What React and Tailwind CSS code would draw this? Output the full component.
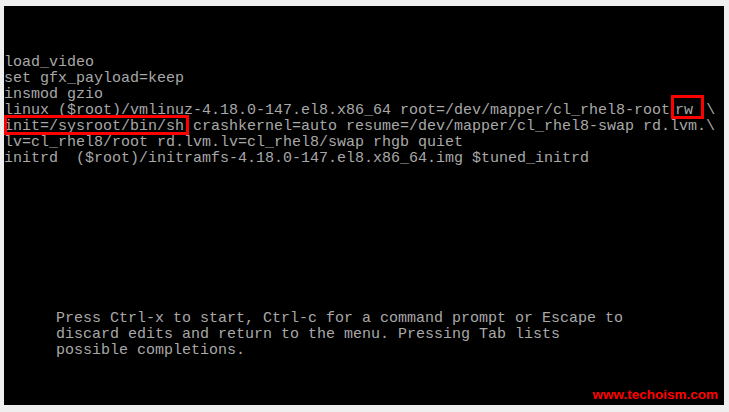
export default function App() {
  const mono = { fontFamily: '"Liberation Mono", "DejaVu Sans Mono", monospace' };
  return (
    <div className="w-[729px] h-[412px] bg-[#efefef] pt-[6px] pl-[4px] overflow-hidden">
      <div className="w-[720px] h-[399px] bg-black flex flex-col">
        <div
          className="pt-[49px] text-[15px] leading-[16px] text-[#a8a8a8] whitespace-pre font-['Liberation_Mono',monospace]"
          style={mono}
        >
          <div>load_video</div>
          <div>set gfx_payload=keep</div>
          <div>insmod gzio</div>
          <div>
            linux ($root)/vmlinuz-4.18.0-147.el8.x86_64 root=/dev/mapper/cl_rhel8-root
            <span className="relative pl-[5px] pr-[13px]">
              rw
              <span className="absolute left-[1px] right-[2px] -top-[7px] -bottom-[0px] border-[3px] border-[#ff0000]" />
            </span>
            {'\\'}
          </div>
          <div>
            <span className="relative">
              init=/sysroot/bin/sh
              <span className="absolute left-0 -right-[5px] -top-[3px] bottom-0 border-[3px] border-[#ff0000]" />
            </span>
            {' crashkernel=auto resume=/dev/mapper/cl_rhel8-swap rd.lvm.\\'}
          </div>
          <div>lv=cl_rhel8/root rd.lvm.lv=cl_rhel8/swap rhgb quiet</div>
          <div>initrd  ($root)/initramfs-4.18.0-147.el8.x86_64.img $tuned_initrd</div>
          <div className="mt-[144px] pl-[52px]">
            <div>Press Ctrl-x to start, Ctrl-c for a command prompt or Escape to</div>
            <div>discard edits and return to the menu. Pressing Tab lists</div>
            <div>possible completions.</div>
          </div>
        </div>
        <div className="mt-auto pb-[2px] pr-[6px] text-right text-[13.5px] leading-[16px] font-bold text-[#ff0000] font-['Liberation_Sans',sans-serif]">
          www.techoism.com
        </div>
      </div>
    </div>
  );
}
